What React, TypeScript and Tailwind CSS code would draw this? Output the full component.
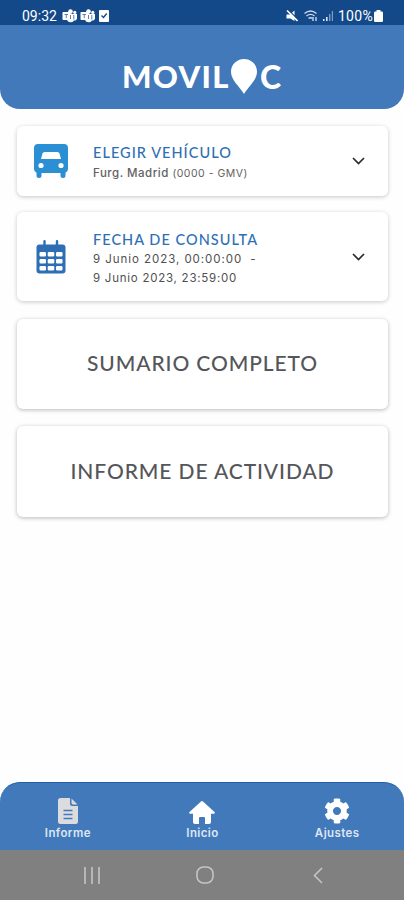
import type { ReactNode } from "react";
import { FaCog } from "react-icons/fa";

function TeamsIcon() {
  return (
    <svg width="16" height="14" viewBox="0 0 16 14" fill="#fff">
      <circle cx="8.5" cy="2.6" r="2.3" />
      <circle cx="12.8" cy="3.4" r="1.6" />
      <path d="M8 5h7v4.2a2.4 2.4 0 0 1-3 2.3A4 4 0 0 1 5 11V5z" />
      <rect x="0.5" y="3" width="7.5" height="8" rx="0.8" />
      <path d="M2.5 5.5h3.5M4.25 5.5v3.7M11.8 6v4.5M8.5 6v4" stroke="#4c76aa" strokeWidth="0.9" />
    </svg>
  );
}

function StatusBar() {
  return (
    <div className="flex h-[25px] items-center bg-[#134889] pt-[6px] pr-[20px] pl-[22px] text-white">
      <span className="w-[40px] font-[Roboto,sans-serif] text-[14px] leading-[18px]">09:32</span>
      <div className="flex items-center gap-[2px]">
        <TeamsIcon />
        <TeamsIcon />
        <svg width="10" height="12" viewBox="0 0 10 12" className="ml-[1px]">
          <rect width="10" height="12" rx="1" fill="#fff" />
          <path d="M2.5 5.5l2 2 3.2-4" fill="none" stroke="#134889" strokeWidth="1.3" />
        </svg>
      </div>
      <div className="ml-auto flex items-center">
        <svg width="12" height="12" viewBox="0 0 12 12" className="mr-[6px]">
          <path d="M0.5 4.5H4L8.5 0.500v10.500L4.500 8.500h-4z" fill="#fff" />
          <path d="M3 0.500l9 9" stroke="#134889" strokeWidth="1.2" />
          <path d="M1 0.5l10.500 10.500" stroke="#fff" strokeWidth="1.6" />
        </svg>
        <svg width="15" height="12" viewBox="0 0 15 12" className="mr-[4px]" fill="none" stroke="#c9d8ea" strokeWidth="1.4">
          <path d="M0.5 3.5q6-5 12 0M2.5 6q4-3.2 8 0M4.5 8.4q2-1.4 4 0" />
          <path d="M9 7v4M12 11V7" />
        </svg>
        <svg width="10" height="10" viewBox="0 0 10 10" className="mr-[5px]">
          <path d="M0 10V8h1.5v2zM3 10V6h1.6v4z" fill="#dce6f2" />
          <path d="M6 10V3h1.4v7zM8.8 10V0H10v10z" fill="#7d9cc4" />
        </svg>
        <span className="font-[Roboto,sans-serif] text-[14px] leading-[18px] tracking-[0.3px]">100%</span>
        <svg width="9" height="12" viewBox="0 0 9 12" className="ml-[1px] mr-px" fill="#fff">
          <rect x="2.5" width="4" height="3" rx="0.5" />
          <rect y="1.5" width="9" height="10.5" rx="1.3" />
        </svg>
      </div>
    </div>
  );
}

function Header() {
  return (
    <div className="bg-white">
      <header className="flex h-[84px] items-start rounded-b-[20px] bg-[#4279ba] pt-[34px] pl-[122px] font-[Lato,sans-serif] text-[31px] leading-[35px] font-black text-white">
        <span className="w-[109px] tracking-[1.3px]">MOVIL</span>
        <svg width="26" height="35" viewBox="0 0 26 35" fill="#fff">
          <path d="M13 0C5.8 0 0 5.5 0 12.8 0 21 8 27 13 35 18 27 26 21 26 12.8 26 5.5 20.2 0 13 0z" />
        </svg>
        <span className="ml-[3px] text-[32px]">C</span>
      </header>
    </div>
  );
}

function VehicleIcon() {
  return (
    <svg width="34" height="34" viewBox="0 0 34 34">
      <path
        d="M4 0h26a4 4 0 0 1 4 4v21a4 4 0 0 1-2.5 3.7V31.5a2.5 2.5 0 0 1-5 0V29H7.5v2.5a2.5 2.5 0 0 1-5 0V28.7A4 4 0 0 1 0 25V4a4 4 0 0 1 4-4z"
        fill="#2b8fd3"
      />
      <path d="M10.5 8h13q1.5 0 2 1.5L27 15H7L8.5 9.5Q9 8 10.5 8z" fill="#fff" />
      <circle cx="7" cy="21.5" r="2.6" fill="#fff" />
      <circle cx="27" cy="21.5" r="2.6" fill="#fff" />
    </svg>
  );
}

function CalendarIcon() {
  return (
    <svg width="30" height="34" viewBox="0 0 30 34">
      <path d="M8.5 1.2v6M21 1.2v6" stroke="#2e6fb4" strokeWidth="2.4" strokeLinecap="round" />
      <rect x="0.5" y="4.5" width="29" height="29" rx="3" fill="#2e6fb4" />
      <g fill="#fff">
        {[12, 19, 26].map((y) =>
          [3.5, 11.75, 20].map((x) => <rect key={`${x}-${y}`} x={x} y={y} width="6.5" height="4.5" rx="1.2" />),
        )}
      </g>
    </svg>
  );
}

function Chevron() {
  return (
    <svg width="13" height="8" viewBox="0 0 13 8" fill="none" stroke="#2c2c2c" strokeWidth="1.7">
      <path d="M1 1l5.5 5.500L12 1" />
    </svg>
  );
}

interface SelectCardProps {
  icon: ReactNode;
  title: string;
  className: string;
  children: ReactNode;
}

function SelectCard({ icon, title, className, children }: SelectCardProps) {
  return (
    <button className={`flex w-full items-center rounded-[6px] bg-white pr-[23px] text-left shadow-[0_1px_4px_rgba(0,0,0,0.22)] ${className}`}>
      <span className="flex w-[68px] justify-center">{icon}</span>
      <span className="flex-1 pt-[5px] pl-[8px]">
        <span className="block font-[Lato,sans-serif] text-[14.5px] leading-[20px] font-medium tracking-[1.03px] whitespace-nowrap text-[#2e6fb4]">
          {title}
        </span>
        {children}
      </span>
      <Chevron />
    </button>
  );
}

const navItems = [
  {
    label: "Informe",
    icon: (
      <svg width="20" height="26" viewBox="0 0 20 26">
        <path d="M2.5 0H12v6q0 2 2 2h6v15.500q0 2.500-2.500 2.500h-15Q0 26 0 23.500v-21Q0 0 2.500 0z" fill="#dcdcdf" />
        <path d="M13.500 0.500l6 6h-4.500q-1.500 0-1.500-1.500z" fill="#dcdcdf" />
        <path d="M5.500 12.500h9M5.500 16.500h9M5.500 20.500h9" stroke="#4279ba" strokeWidth="1.500" />
      </svg>
    ),
  },
  {
    label: "Inicio",
    icon: (
      <svg width="26" height="23" viewBox="0 0 26 23" fill="#fff">
        <path d="M12 .5q1-.8 2 0L25.5 11q1 1.800-.8 1.800H22V21q0 2-2 2h-4v-6q0-1-1-1h-4q-1 0-1 1v6H6q-2 0-2-2v-8.200H1.300Q-.5 12.800.5 11z" />
      </svg>
    ),
  },
  { label: "Ajustes", icon: <FaCog size={26} color="#fff" /> },
];

export default function App() {
  return (
    <div className="flex h-[900px] w-[404px] flex-col overflow-hidden bg-[#fefefe] font-[Inter,sans-serif]">
      <StatusBar />
      <Header />
      <main className="flex flex-1 flex-col pt-[17px] pr-[16px] pl-[17px]">
        <SelectCard title="ELEGIR VEHÍCULO" className="h-[70px]" icon={<VehicleIcon />}>
          <span className="block text-[11.5px] leading-[20px] font-medium tracking-[0.5px] text-[#626262]">
            Furg. Madrid <span className="text-[10.5px] font-normal">(0000 - GMV)</span>
          </span>
        </SelectCard>
        <SelectCard title="FECHA DE CONSULTA" className="mt-[16px] h-[89px]" icon={<CalendarIcon />}>
          <span className="block text-[11.5px] leading-[19px] tracking-[0.75px] whitespace-nowrap text-[#505050]">
            <span className="tracking-[0.95px]">9 Junio 2023, 00:00:00</span> &nbsp;-
            <br />9 Junio 2023, 23:59:00
          </span>
        </SelectCard>
        <button className="mt-[18px] h-[90px] rounded-[6px] bg-white pb-[2px] font-[Lato,sans-serif] text-[21px] font-medium tracking-[0.9px] text-[#55565a] shadow-[0_1px_4px_rgba(0,0,0,0.28)]">
          SUMARIO COMPLETO
        </button>
        <button className="mt-[17px] h-[91px] rounded-[6px] bg-white pb-[2px] font-[Lato,sans-serif] text-[21px] font-medium tracking-[0.9px] text-[#55565a] shadow-[0_1px_4px_rgba(0,0,0,0.28)]">
          INFORME DE ACTIVIDAD
        </button>
      </main>
      <nav className="grid h-[68px] grid-cols-3 rounded-t-[20px] border-t border-[#1d5fa8] bg-[#4279ba]">
        {navItems.map((item) => (
          <a key={item.label} className="flex flex-col items-center pt-[15px] pl-px">
            <span className="flex h-[26px] items-end">{item.icon}</span>
            <span className="text-[11.5px] leading-[18px] font-semibold tracking-[0.4px] text-[#dce7f4]">{item.label}</span>
          </a>
        ))}
      </nav>
      <div className="flex h-[50px] items-center bg-[#808080] pl-[84px]">
        <svg width="16" height="17" viewBox="0 0 16 17" stroke="#c4c4c4" strokeWidth="1.6">
          <path d="M1 0v17M8 0v17M15 0v17" />
        </svg>
        <svg width="18" height="18" viewBox="0 0 18 18" className="ml-[96px]" fill="none" stroke="#c4c4c4" strokeWidth="1.6">
          <rect x="1" y="1" width="16" height="16" rx="6.5" />
        </svg>
        <svg width="10" height="17" viewBox="0 0 10 17" className="ml-[99px]" fill="none" stroke="#c4c4c4" strokeWidth="1.6">
          <path d="M9 1L1.5 8.5 9 16" />
        </svg>
      </div>
    </div>
  );
}
